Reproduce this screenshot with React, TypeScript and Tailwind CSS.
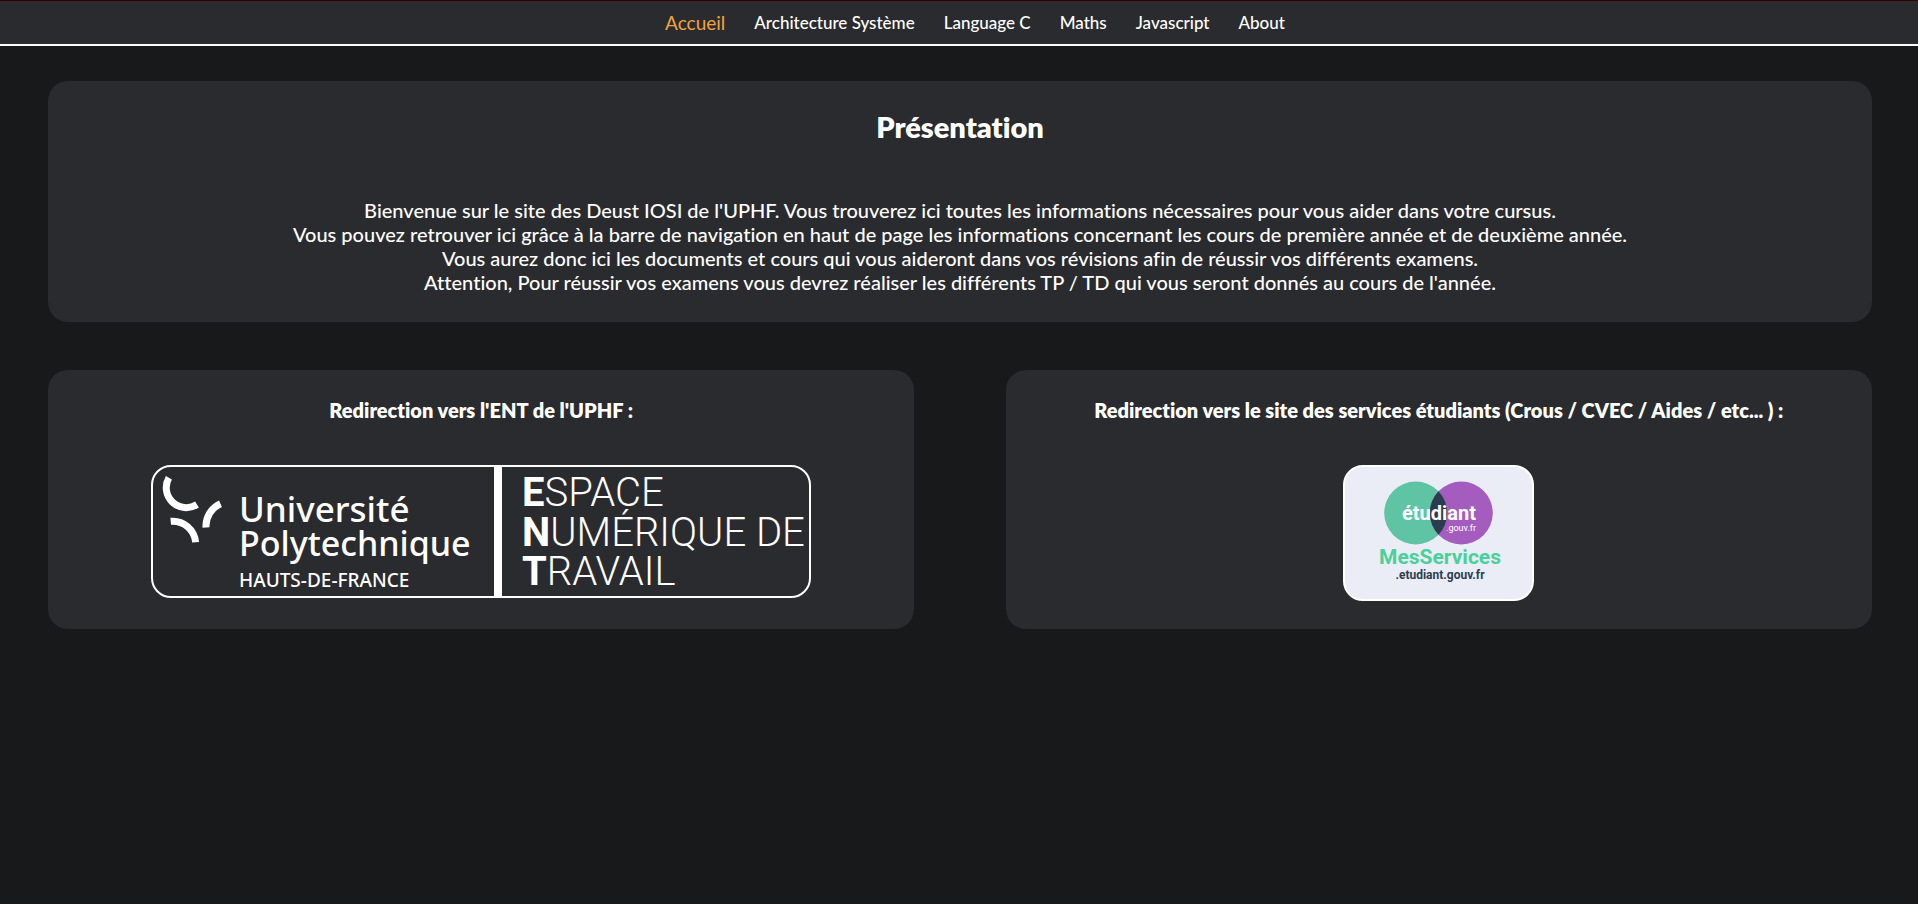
import type { ReactNode } from "react";

const navLinks = [
  { label: "Architecture Système", href: "#architecture" },
  { label: "Language C", href: "#language-c" },
  { label: "Maths", href: "#maths" },
  { label: "Javascript", href: "#javascript" },
  { label: "About", href: "#about" },
];

const introLines = [
  "Bienvenue sur le site des Deust IOSI de l'UPHF. Vous trouverez ici toutes les informations nécessaires pour vous aider dans votre cursus.",
  "Vous pouvez retrouver ici grâce à la barre de navigation en haut de page les informations concernant les cours de première année et de deuxième année.",
  "Vous aurez donc ici les documents et cours qui vous aideront dans vos révisions afin de réussir vos différents examens.",
  "Attention, Pour réussir vos examens vous devrez réaliser les différents TP / TD qui vous seront donnés au cours de l'année.",
];

function NavBar() {
  return (
    <nav className="border-t border-b-2 border-t-[#350000] border-b-white bg-[#2a2b2f]">
      <ul className="flex h-[43px] items-center justify-center gap-[29px] pt-px pl-8 text-[17px] font-medium">
        <li>
          <a href="#accueil" aria-current="page" className="text-[19px] font-normal text-[#f1a340]">
            Accueil
          </a>
        </li>
        {navLinks.map((link) => (
          <li key={link.href}>
            <a href={link.href}>{link.label}</a>
          </li>
        ))}
      </ul>
    </nav>
  );
}

function UniversityLogo() {
  return (
    <svg viewBox="0 0 656 129" className="block w-[656px] max-w-full" role="img" aria-label="Espace Numérique de Travail">
      <g fill="none" stroke="#fff" strokeWidth="7">
        <path d="M15.9 10.7A20 20 0 0 0 44 37.5" />
        <path d="M67.5 36.7A24.5 24.5 0 0 0 53 60.5" />
        <path d="M17.7 54.3A23 23 0 0 1 42.6 75.3" />
      </g>
      <rect x="341" width="8" height="129" fill="#fff" />
      <g fill="#fff" className="font-['Noto_Sans',sans-serif]">
        <text x="86" y="55" fontSize="35" fontWeight="500">Université</text>
        <text x="86" y="89" fontSize="34" fontWeight="500">Polytechnique</text>
        <text x="86" y="120" fontSize="19" fontWeight="500">HAUTS-DE-FRANCE</text>
      </g>
      <g fill="#fff" fontSize="40" fontWeight="300" className="font-[Roboto,sans-serif]">
        <text x="369" y="39"><tspan fontWeight="700">E</tspan>SPACE</text>
        <text x="369" y="79"><tspan fontWeight="700">N</tspan>UMÉRIQUE DE</text>
        <text x="369" y="118"><tspan fontWeight="700">T</tspan>RAVAIL</text>
      </g>
    </svg>
  );
}

function StudentServicesLogo() {
  return (
    <svg viewBox="0 0 187 132" className="block w-[187px]" role="img" aria-label="MesServices.etudiant.gouv.fr">
      <circle cx="70.7" cy="46" r="31.5" fill="#5ec4a3" />
      <circle cx="116.3" cy="46" r="31.5" fill="#a45dbf" />
      <path d="M93.5 24.3A31.5 31.5 0 0 1 93.5 67.7A31.5 31.5 0 0 1 93.5 24.3Z" fill="#2c3c50" />
      <g fontWeight="700" textAnchor="middle" className="font-[Roboto,sans-serif]">
        <text x="94" y="53" fontSize="20" fill="#fff">étudiant</text>
        <text x="116" y="64" fontSize="9" fontWeight="400" fill="#fff">.gouv.fr</text>
        <text x="95" y="97" fontSize="21" fill="#4bd09b">MesServices</text>
        <text x="95" y="112" fontSize="12" fill="#2c3c50">.etudiant.gouv.fr</text>
      </g>
    </svg>
  );
}

function LinkCard({ title, children }: { title: string; children: ReactNode }) {
  return (
    <section className="flex flex-1 flex-col items-center rounded-[20px] bg-[#2a2b2f] py-7">
      <h2 className="mb-[43px] text-center text-xl leading-6 font-extrabold">{title}</h2>
      {children}
    </section>
  );
}

export default function App() {
  return (
    <div className="min-h-screen bg-[#18191b] font-[Lato,sans-serif] text-white [font-variant-ligatures:none]">
      <NavBar />
      <main className="flex flex-col gap-12 pt-[35px] pr-[46px] pb-12 pl-12">
        <section className="rounded-[20px] bg-[#2a2b2f] px-6 py-7 text-center">
          <h1 className="mb-[53px] text-[29px] leading-9 font-extrabold">Présentation</h1>
          <div className="text-xl leading-6 font-medium">
            {introLines.map((line) => (
              <p key={line}>{line}</p>
            ))}
          </div>
        </section>
        <div className="flex gap-[5%]">
          <LinkCard title="Redirection vers l'ENT de l'UPHF :">
            <a href="#ent" className="overflow-hidden rounded-[20px] border-2 border-white">
              <UniversityLogo />
            </a>
          </LinkCard>
          <LinkCard title="Redirection vers le site des services étudiants (Crous / CVEC / Aides / etc... ) :">
            <a href="#services" className="overflow-hidden rounded-[20px] border-2 border-white bg-[#eaedf5]">
              <StudentServicesLogo />
            </a>
          </LinkCard>
        </div>
      </main>
    </div>
  );
}
